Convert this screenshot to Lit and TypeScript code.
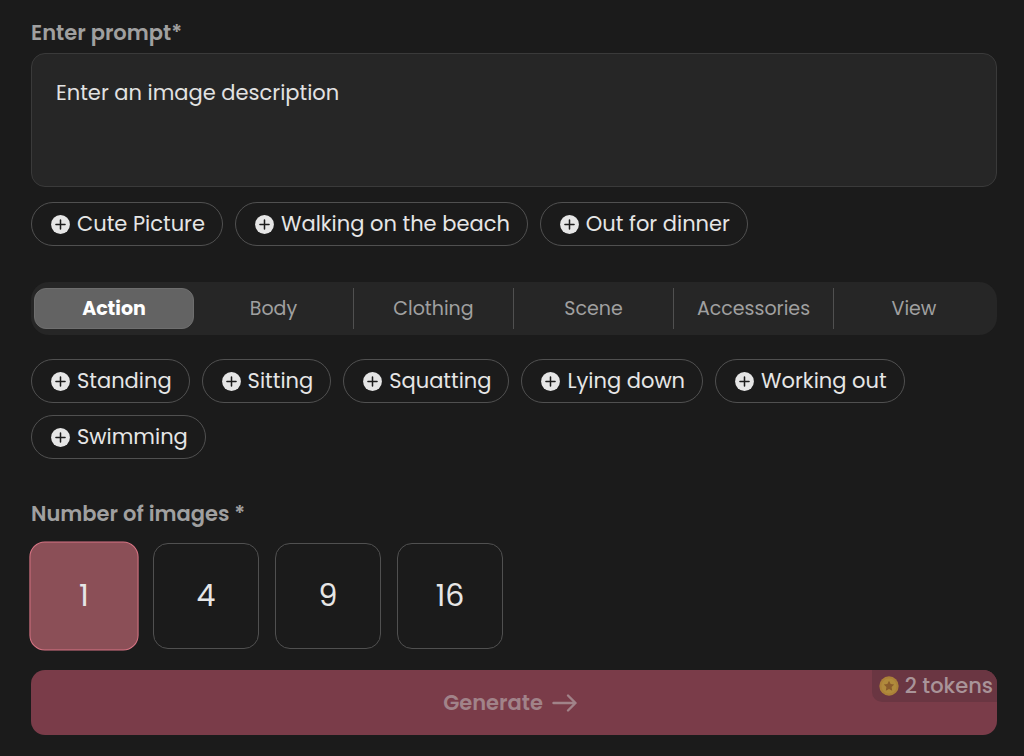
import { LitElement, html, css } from "lit";
import { customElement, state, property } from "lit/decorators.js";
import { classMap } from "lit/directives/class-map.js";

@customElement("prompt-chip")
class PromptChip extends LitElement {
  @property() label = "";

  static styles = css`
    :host {
      display: block;
    }
    .chip {
      display: flex;
      align-items: center;
      gap: 7px;
      height: 44px;
      padding: 0 17px 0 19px;
      border: 1px solid #505050;
      border-radius: 24px;
      background: transparent;
      color: #e6e6e6;
      font: inherit;
      white-space: nowrap;
      cursor: pointer;
    }
    .plus {
      flex: none;
      width: 19px;
      height: 19px;
    }
  `;

  render() {
    return html`<button class="chip" type="button">
      <svg class="plus" viewBox="0 0 20 20" aria-hidden="true">
        <circle cx="10" cy="10" r="9.9" fill="#e6e6e6" />
        <path d="M10 5.2v9.6M5.2 10h9.6" stroke="#1b1b1b" stroke-width="1.6" stroke-linecap="round" />
      </svg>
      <span>${this.label}</span>
    </button>`;
  }
}

@customElement("app-root")
class AppRoot extends LitElement {
  @state() tab = "Action";
  @state() count = 1;

  prompts = ["Cute Picture", "Walking on the beach", "Out for dinner"];
  tabs = ["Action", "Body", "Clothing", "Scene", "Accessories", "View"];
  actions = ["Standing", "Sitting", "Squatting", "Lying down", "Working out", "Swimming"];
  counts = [1, 4, 9, 16];

  static styles = css`
    :host {
      display: block;
      box-sizing: border-box;
      min-height: 100vh;
      padding: 18px 27px 21px 31px;
      background: #1b1b1b;
      color: #e6e6e6;
      font-family: "Poppins", "Inter", sans-serif;
      font-size: 21px;
      line-height: 28px;
    }
    * {
      box-sizing: border-box;
    }
    .heading {
      display: block;
      margin: 0;
      padding: 0;
      color: #a0a0a0;
      font-weight: 600;
      line-height: 30px;
    }
    .prompt {
      display: block;
      width: 100%;
      height: 134px;
      margin: 5px 0 15px;
      padding: 25px 24px;
      border: 1px solid #3a3a3a;
      border-radius: 14px;
      background: #262626;
      color: #e6e6e6;
      font: inherit;
      resize: none;
    }
    .prompt::placeholder {
      color: #e2e2e2;
      opacity: 1;
    }
    .chips {
      display: flex;
      flex-wrap: wrap;
      gap: 12px;
    }
    .tabs {
      display: grid;
      grid-template-columns: repeat(6, 1fr);
      margin: 36px 0 24px;
      padding: 6px 3px;
      border-radius: 18px;
      background: #262626;
    }
    .tab {
      height: 41px;
      padding: 1px 0 0;
      border: 0;
      border-right: 1px solid #505050;
      background: transparent;
      color: #a0a0a0;
      font: inherit;
      font-size: 19px;
      cursor: pointer;
    }
    .tab:last-child {
      border-right: 0;
    }
    .tab.active {
      border: 1px solid #6e6e6e;
      border-radius: 12px;
      background: #636363;
      color: #ffffff;
      font-weight: 700;
    }
    .counts {
      margin: 40px 0 21px;
      padding: 0;
      border: 0;
    }
    .options {
      display: flex;
      gap: 16px;
      margin-top: 14px;
    }
    .option {
      display: grid;
      place-items: center;
      width: 106px;
      height: 106px;
      border: 1px solid #505050;
      border-radius: 15px;
      font-size: 30px;
      cursor: pointer;
    }
    .option input {
      appearance: none;
      width: 0;
      height: 0;
      margin: 0;
      grid-area: 1 / 1;
    }
    .option span {
      grid-area: 1 / 1;
    }
    .option.selected {
      border-color: #d97585;
      background: #8b4f57;
      transform: scale(1.03);
    }
    .generate {
      position: relative;
      display: flex;
      align-items: center;
      justify-content: center;
      gap: 4px;
      width: 100%;
      height: 65px;
      padding: 0;
      overflow: hidden;
      border: 0;
      border-radius: 14px;
      background: #7a3c49;
      color: #a18389;
      font: inherit;
      font-weight: 600;
    }
    .arrow {
      width: 38px;
      height: 24px;
    }
    .tokens {
      position: absolute;
      top: 0;
      right: 0;
      display: flex;
      align-items: center;
      gap: 6px;
      height: 32px;
      padding: 0 4px 0 7px;
      border-radius: 0 0 0 10px;
      background: #6a3642;
      color: #a99499;
      font-weight: 500;
    }
    .coin {
      width: 20px;
      height: 20px;
    }
  `;

  renderChips(labels: string[]) {
    return html`<div class="chips">
      ${labels.map((label) => html`<prompt-chip .label=${label}></prompt-chip>`)}
    </div>`;
  }

  render() {
    return html`
      <label class="heading" for="prompt">Enter prompt*</label>
      <textarea class="prompt" id="prompt" placeholder="Enter an image description"></textarea>
      ${this.renderChips(this.prompts)}

      <div class="tabs" role="tablist">
        ${this.tabs.map(
          (name) => html`<button
            type="button"
            role="tab"
            aria-selected=${name === this.tab ? "true" : "false"}
            class=${classMap({ tab: true, active: name === this.tab })}
            @click=${() => (this.tab = name)}
          >${name}</button>`
        )}
      </div>
      ${this.renderChips(this.actions)}

      <fieldset class="counts">
        <legend class="heading">Number of images *</legend>
        <div class="options">
          ${this.counts.map(
            (n) => html`<label class=${classMap({ option: true, selected: n === this.count })}>
              <input
                type="radio"
                name="count"
                .checked=${n === this.count}
                @change=${() => (this.count = n)}
              />
              <span>${n}</span>
            </label>`
          )}
        </div>
      </fieldset>

      <button class="generate" type="button" disabled>
        <span>Generate</span>
        <svg class="arrow" viewBox="0 0 38 24" fill="none" stroke="currentColor" stroke-width="2.4" stroke-linecap="round" stroke-linejoin="round" aria-hidden="true">
          <path d="M6.5 12h22M21 4.5l7.5 7.5-7.5 7.5" />
        </svg>
        <span class="tokens">
          <svg class="coin" viewBox="0 0 20 20" aria-hidden="true">
            <circle cx="10" cy="10" r="9.7" fill="#ab8038" />
            <circle cx="10" cy="10" r="7.6" fill="#b08a3c" />
            <path d="M10 4.8l1.6 3.3 3.6.5-2.6 2.5.6 3.6-3.2-1.7-3.2 1.7.6-3.6-2.6-2.5 3.6-.5z" fill="#8a5c2c" />
          </svg>
          <span>2 tokens</span>
        </span>
      </button>
    `;
  }
}
